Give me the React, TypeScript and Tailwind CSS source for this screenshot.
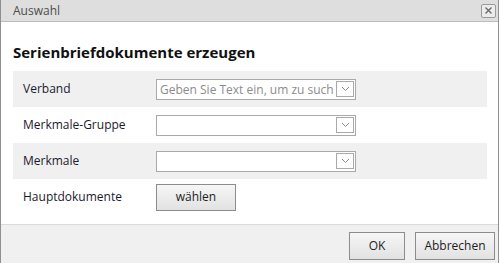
import React from 'react';

const font = { fontFamily: '"Open Sans", "Noto Sans", sans-serif' };

const Chevron = () => (
  <svg width="9" height="6" viewBox="0 0 9 6" className="block">
    <path d="M1 1 L4.5 4.5 L8 1" fill="none" stroke="#8a8a8a" strokeWidth="1" />
  </svg>
);

const Combo: React.FC<{ placeholder?: string }> = ({ placeholder }) => (
  <div className="flex items-center h-[21px] w-[200px] border border-[#a9a9a9] bg-white pl-[3px] pr-[1px]">
    <span className="flex-1 min-w-0 overflow-hidden whitespace-nowrap text-[12px] text-[#8c8c8c] leading-[19px]">
      {placeholder}
    </span>
    <span className="flex items-center justify-center w-[18px] h-[16px] border border-[#a9a9a9] bg-white shrink-0">
      <Chevron />
    </span>
  </div>
);

const Btn: React.FC<{ w: string; h: string; children: React.ReactNode }> = ({ w, h, children }) => (
  <button
    className={`${w} ${h} border border-[#8c8c8c] bg-gradient-to-b from-[#f6f6f6] to-[#e2e2e2] text-[12px] text-[#1e1e1e]`}
  >
    {children}
  </button>
);

export default function App() {
  const rows = [
    { label: 'Verband', alt: true, field: <Combo placeholder="Geben Sie Text ein, um zu such" /> },
    { label: 'Merkmale-Gruppe', alt: false, field: <Combo /> },
    { label: 'Merkmale', alt: true, field: <Combo /> },
    { label: 'Hauptdokumente', alt: false, field: <Btn w="w-[80px]" h="h-[27px]">wählen</Btn> },
  ];

  return (
    <div className="w-[500px] h-[263px] bg-white" style={font}>
      <div className="w-[499px] h-[263px] flex flex-col border-l border-r border-[#8f8f8f]">
        <div className="h-[22px] shrink-0 flex items-center justify-between bg-[#dedede] border-b border-[#bdbdbd] pl-[12px] pr-[2px]">
          <span className="text-[12px] text-[#4d4d4d] leading-none">Auswahl</span>
          <span className="flex items-center justify-center w-[15px] h-[14px] border border-[#9a9a9a] rounded-[2px] bg-[#ececec]">
            <svg width="7" height="7" viewBox="0 0 7 7">
              <path d="M0.5 0.5 L6.5 6.5 M6.5 0.5 L0.5 6.5" stroke="#6a6a6a" strokeWidth="1.4" />
            </svg>
          </span>
        </div>

        <div className="flex-1 pl-[12px] pr-[11px]">
          <h1 className="text-[15px] font-bold text-[#111] leading-[20px] mt-[20px] mb-[9px]">
            Serienbriefdokumente erzeugen
          </h1>
          <div className="flex flex-col">
            {rows.map((r) => (
              <div
                key={r.label}
                className={`flex items-center h-[36px] pl-[10px] ${r.alt ? 'bg-[#f0f0f0]' : 'bg-white'}`}
              >
                <span className="w-[133px] text-[12px] text-[#1a1a2e]">{r.label}</span>
                {r.field}
              </div>
            ))}
          </div>
        </div>

        <div className="h-[39px] shrink-0 flex items-start justify-end gap-[10px] pt-[7px] pr-[3px] bg-[#f0f0f0] border-t border-[#dadada]">
          <Btn w="w-[56px]" h="h-[28px]">OK</Btn>
          <Btn w="w-[80px]" h="h-[28px]">Abbrechen</Btn>
        </div>
      </div>
    </div>
  );
}
